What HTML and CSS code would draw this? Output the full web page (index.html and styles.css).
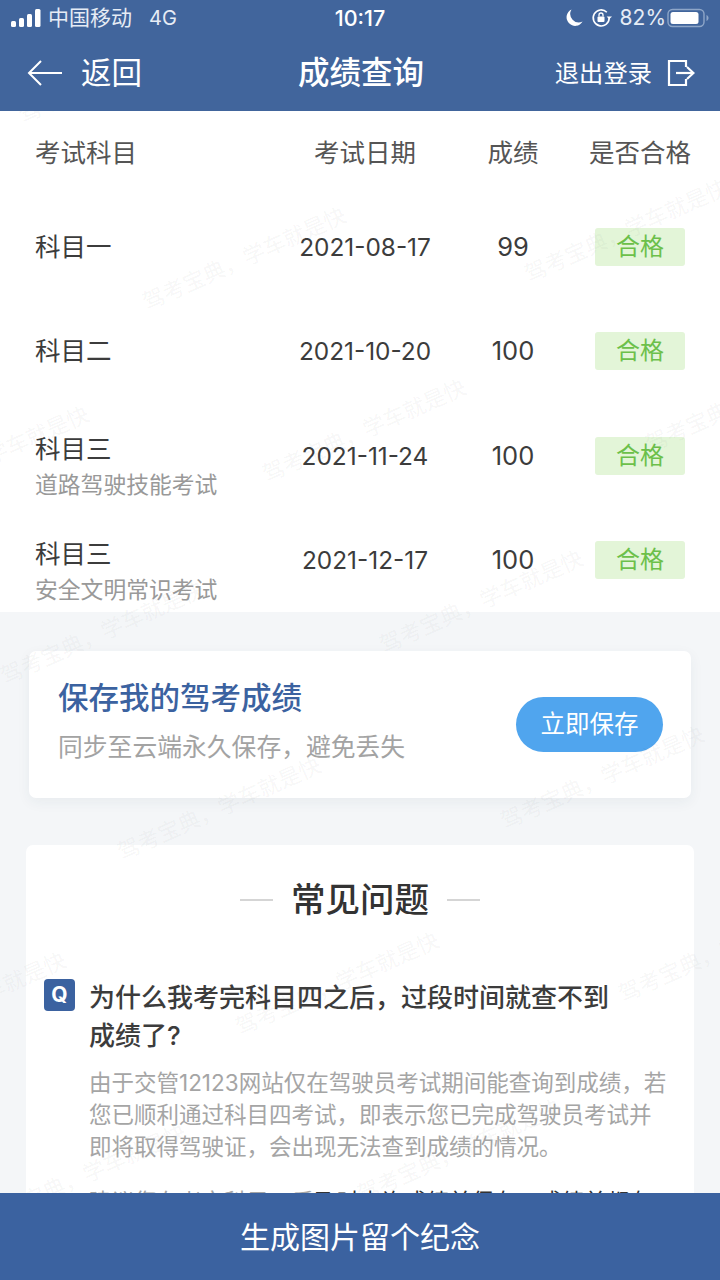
FILE: index.html
```html
<!DOCTYPE html>
<html lang="zh-CN">
<head>
    <meta charset="UTF-8">
    <meta name="viewport" content="width=device-width, initial-scale=1.0">
    <title>成绩查询</title>
    <link rel="stylesheet" href="styles.css">
</head>
<body>
<div class="page">
    <header class="topbar">
        <div class="status">
            <div class="status-left">
                <svg class="signal" width="31" height="18" viewBox="0 0 31 18"><rect x="0" y="12" width="5" height="6" rx="1.5"/><rect x="8" y="9" width="5" height="9" rx="1.5"/><rect x="16" y="5" width="5" height="13" rx="1.5"/><rect x="24" y="0" width="5.5" height="18" rx="1.5"/></svg>
                <span>中国移动</span>
                <span class="net">4G</span>
            </div>
            <div class="status-time">10:17</div>
            <div class="status-right">
                <svg width="20" height="20" viewBox="0 0 20 20"><path d="M7.5 1.5A8.6 8.6 0 0 0 18.6 13.6 8.6 8.6 0 1 1 7.5 1.5Z" fill="#fff"/></svg>
                <svg width="22" height="20" viewBox="0 0 22 20" fill="none" stroke="#fff" stroke-width="1.6"><path d="M18.2 10a8 8 0 1 1-2.4-5.8"/><path d="M21 8.6l-2.8 2.6-2.6-2.6z" fill="#fff" stroke="none"/><rect x="6.5" y="8.6" width="7" height="5.4" rx="1" fill="#fff" stroke="none"/><path d="M8 8.6V7a2 2 0 0 1 4 0v1.6" stroke-width="1.3"/></svg>
                <span class="pct">82%</span>
                <svg width="42" height="20" viewBox="0 0 42 20"><rect x="1" y="1.5" width="36" height="17" rx="4.5" fill="none" stroke="#8ea6c8" stroke-width="1.4"/><rect x="3.5" y="4" width="28" height="12" rx="2.5" fill="#fff"/><path d="M39.5 7v6c1.2-.5 2-1.6 2-3s-.8-2.5-2-3Z" fill="#8ea6c8"/></svg>
            </div>
        </div>
        <nav class="nav">
            <div class="nav-back">
                <svg width="36" height="28" viewBox="0 0 36 28" fill="none" stroke="#fff" stroke-width="2"><path d="M35 14H2"/><path d="M14 2 2 14l12 12"/></svg>
                <span>返回</span>
            </div>
            <div class="nav-title">成绩查询</div>
            <div class="nav-logout">
                <span>退出登录</span>
                <svg width="28" height="28" viewBox="0 0 28 28" fill="none" stroke="#fff" stroke-width="2.2"><path d="M19 8V2H2v24h17v-6"/><path d="M9 14h17"/><path d="M20 8l6.5 6-6.5 6"/></svg>
            </div>
        </nav>
    </header>

    <main class="content">
        <section class="scores">
            <div class="row row-head">
                <div>考试科目</div>
                <div class="cell">考试日期</div>
                <div class="cell">成绩</div>
                <div class="cell">是否合格</div>
            </div>
            <div class="row">
                <div class="subject">科目一</div>
                <div class="cell date">2021-08-17</div>
                <div class="cell">99</div>
                <div class="cell"><span class="badge">合格</span></div>
            </div>
            <div class="row">
                <div class="subject">科目二</div>
                <div class="cell date">2021-10-20</div>
                <div class="cell">100</div>
                <div class="cell"><span class="badge">合格</span></div>
            </div>
            <div class="row">
                <div class="subject">科目三<div class="subject-note">道路驾驶技能考试</div></div>
                <div class="cell date">2021-11-24</div>
                <div class="cell">100</div>
                <div class="cell"><span class="badge">合格</span></div>
            </div>
            <div class="row">
                <div class="subject">科目三<div class="subject-note">安全文明常识考试</div></div>
                <div class="cell date">2021-12-17</div>
                <div class="cell">100</div>
                <div class="cell"><span class="badge">合格</span></div>
            </div>
        </section>

        <section class="save-card">
            <div class="save-text">
                <div class="save-title">保存我的驾考成绩</div>
                <div class="save-sub">同步至云端永久保存，避免丢失</div>
            </div>
            <div class="save-btn">立即保存</div>
        </section>

        <section class="faq">
            <h2 class="faq-title">常见问题</h2>
            <div class="faq-q">
                <span class="q-mark">Q</span>
                <div class="q-text">为什么我考完科目四之后，过段时间就查不到成绩了?</div>
            </div>
            <div class="faq-a">
                <p>由于交管12123网站仅在驾驶员考试期间能查询到成绩，若您已顺利通过科目四考试，即表示您已完成驾驶员考试并即将取得驾驶证，会出现无法查到成绩的情况。</p>
                <p>建议您在考完科目三后<span class="faq-strong">及时查询成绩并保存，成绩单都有</span></p>
            </div>
        </section>

        <!-- watermark sits over the cards -->
        <div class="marks">
            <span class="mark m1">驾考宝典，学车就是快</span>
            <span class="mark m2">驾考宝典，学车就是快</span>
            <span class="mark m3">驾考宝典，学车就是快</span>
            <span class="mark m4">驾考宝典，学车就是快</span>
            <span class="mark m5">驾考宝典，学车就是快</span>
            <span class="mark m6">驾考宝典，学车就是快</span>
            <span class="mark m7">驾考宝典，学车就是快</span>
            <span class="mark m8">驾考宝典，学车就是快</span>
            <span class="mark m9">驾考宝典，学车就是快</span>
            <span class="mark m10">驾考宝典，学车就是快</span>
            <span class="mark m11">驾考宝典，学车就是快</span>
            <span class="mark m12">驾考宝典，学车就是快</span>
            <span class="mark m13">驾考宝典，学车就是快</span>
            <span class="mark m14">驾考宝典，学车就是快</span>
            <span class="mark m15">驾考宝典，学车就是快</span>
        </div>
    </main>

    <footer class="bottom-bar">生成图片留个纪念</footer>
</div>
</body>
</html>
```

FILE: styles.css
```css
* {
    box-sizing: border-box;
}
body {
    margin: 0;
    font-family: Inter, "Noto Sans CJK SC", sans-serif;
    color: #3c3c3c;
}
.page {
    width: 720px;
    height: 1280px;
    display: flex;
    flex-direction: column;
    overflow: hidden;
    background-color: #f4f6f8;
}
.topbar {
    height: 111px;
    flex-shrink: 0;
    background-color: #41659c;
    color: #fff;
}
.status {
    height: 36px;
    display: grid;
    grid-template-columns: 1fr auto 1fr;
    align-items: center;
    padding: 0 11px;
    font-size: 21px;
    line-height: 28px;
    color: #e6ecf5;
}
.status-left {
    display: flex;
    align-items: center;
    gap: 6px;
}
.signal {
    fill: #fff;
}
.net {
    margin-left: 11px;
    font-size: 20px;
}
.status-time {
    font-size: 21.5px;
    font-weight: 500;
    color: #fff;
}
.status-right {
    display: flex;
    align-items: center;
    justify-content: flex-end;
    gap: 7px;
}
.pct {
    margin-right: -6px;
}
.nav {
    height: 75px;
    display: grid;
    grid-template-columns: 1fr auto 1fr;
    align-items: center;
    padding: 0 25px 1px 27px;
    line-height: 40px;
}
.nav-back {
    display: flex;
    align-items: center;
    gap: 18px;
    font-size: 30.5px;
}
.nav-title {
    font-size: 31.5px;
    font-weight: 500;
}
.nav-logout {
    display: flex;
    align-items: center;
    justify-content: flex-end;
    gap: 15px;
    font-size: 24.3px;
}
.content {
    flex: 1;
    min-height: 0;
    position: relative;
    overflow: hidden;
}
.scores {
    background-color: #fff;
    height: 501px;
    overflow: hidden;
}
.row {
    display: grid;
    grid-template-columns: 235px 190px 106px 148px;
    align-items: center;
    height: 104.33px;
    padding-left: 35px;
    font-size: 25.5px;
    line-height: 36px;
}
.row-head {
    height: 84px;
    color: #555;
}
.cell {
    text-align: center;
}
.date {
    font-size: 24.4px;
}
.subject-note {
    font-size: 22.8px;
    color: #999;
    margin-bottom: -23px;
}
.badge {
    display: block;
    width: 90px;
    height: 38px;
    margin: 0 auto;
    line-height: 38px;
    border-radius: 3px;
    background-color: #e3f5d8;
    color: #6cc04a;
    font-size: 24px;
}
.save-card {
    display: flex;
    align-items: center;
    justify-content: space-between;
    height: 147px;
    margin: 39px 29px 0;
    padding: 0 28px 0 29px;
    background-color: #fff;
    border-radius: 7px;
    box-shadow: 0 4px 14px rgba(40, 60, 90, 0.06);
}
.save-text {
    padding-bottom: 8px;
}
.save-title {
    font-size: 30.5px;
    font-weight: 500;
    color: #3b62a0;
    line-height: 44px;
}
.save-sub {
    font-size: 24.8px;
    color: #a3a3a3;
    line-height: 36px;
    margin-top: 9px;
}
.save-btn {
    width: 147px;
    height: 55px;
    line-height: 55px;
    text-align: center;
    border-radius: 28px;
    background-color: #50a5ee;
    color: #fff;
    font-size: 24.5px;
}
.faq {
    margin: 47px 26px 0;
    padding: 32px 24px 0 18px;
    background-color: #fff;
    border-radius: 7px;
    height: 400px;
}
.faq-title {
    display: flex;
    align-items: center;
    justify-content: center;
    gap: 18px;
    margin: 0 0 56px 6px;
    font-size: 34.5px;
    font-weight: 500;
    line-height: 46px;
    color: #333;
}
.faq-title::before,
.faq-title::after {
    content: "";
    width: 33px;
    height: 2px;
    background-color: #d5d5d5;
}
.faq-q {
    display: flex;
    gap: 14px;
    font-size: 26px;
    font-weight: 500;
    line-height: 37.5px;
}
.q-text {
    width: 540px;
}
.q-mark {
    flex-shrink: 0;
    width: 31px;
    height: 32px;
    border-radius: 4px;
    background-color: #3b62a0;
    color: #fff;
    font-size: 21px;
    font-weight: 700;
    line-height: 32px;
    text-align: center;
}
.faq-a {
    margin: 13px 0 0 45px;
    font-size: 22.5px;
    line-height: 32px;
    color: #a5a5a5;
}
.faq-a p {
    margin: 0 0 23px;
}
.faq-strong {
    color: #333;
}
.marks {
    position: absolute;
    top: 0;
    left: 0;
    width: 720px;
    height: 1082px;
    overflow: hidden;
    pointer-events: none;
}
.mark {
    position: absolute;
    width: 222px;
    font-size: 22px;
    line-height: 30px;
    white-space: nowrap;
    color: rgba(60, 60, 60, 0.055);
    transform: rotate(-24deg);
}
.m1 { left: 10px; top: -55px; }
.m2 { left: 134px; top: 132px; }
.m3 { left: 516px; top: 104px; }
.m4 { left: -123px; top: 331px; }
.m5 { left: 254px; top: 304px; }
.m6 { left: 637px; top: 274px; }
.m7 { left: -8px; top: 506px; }
.m8 { left: 371px; top: 475px; }
.m9 { left: 109px; top: 682px; }
.m10 { left: 492px; top: 651px; }
.m11 { left: -146px; top: 877px; }
.m12 { left: 227px; top: 857px; }
.m13 { left: 610px; top: 824px; }
.m14 { left: -26px; top: 1049px; }
.m15 { left: 349px; top: 1024px; }
.bottom-bar {
    height: 87px;
    flex-shrink: 0;
    position: relative;
    line-height: 89px;
    text-align: center;
    background-color: #3b62a0;
    color: #fff;
    font-size: 30px;
}
```
